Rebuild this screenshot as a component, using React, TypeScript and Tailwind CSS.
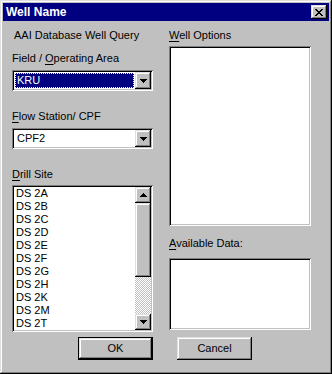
const sunken =
  'shadow-[inset_1px_1px_0_#808080,inset_-1px_-1px_0_#fff,inset_2px_2px_0_#000,inset_-2px_-2px_0_#c0c0c0]';
const raised =
  'shadow-[inset_-1px_-1px_0_#000,inset_1px_1px_0_#dfdfdf,inset_-2px_-2px_0_#808080,inset_2px_2px_0_#fff]';

function Arrow({ dir }: { dir: 'up' | 'down' }) {
  const d =
    dir === 'up'
      ? 'M3 0h1v1h-1zM2 1h3v1h-3zM1 2h5v1h-5zM0 3h7v1h-7z'
      : 'M0 0h7v1h-7zM1 1h5v1h-5zM2 2h3v1h-3zM3 3h1v1h-1z';
  return (
    <svg width="7" height="4" viewBox="0 0 7 4" shapeRendering="crispEdges">
      <path d={d} fill="#000" />
    </svg>
  );
}

function ArrowButton({ dir, className = '' }: { dir: 'up' | 'down'; className?: string }) {
  return (
    <div className={`flex w-[16px] items-center justify-center bg-[#c0c0c0] ${raised} ${className}`}>
      <Arrow dir={dir} />
    </div>
  );
}

function Combo({ value, selected }: { value: string; selected?: boolean }) {
  return (
    <div className={`flex h-[21px] w-[141px] bg-white p-[2px] ${sunken}`}>
      <div className="flex flex-1 p-[1px]">
        <div
          className={`flex flex-1 items-center pl-[2px] leading-[13px] ${
            selected ? 'bg-[#000080] text-white outline-1 outline-dotted outline-offset-[-1px] outline-[#ffff80]' : 'text-black'
          }`}
        >
          {value}
        </div>
      </div>
      <ArrowButton dir="down" className="h-[17px]" />
    </div>
  );
}

function Label({ children, className = '' }: { children: React.ReactNode; className?: string }) {
  return <div className={`h-[13px] leading-[13px] ${className}`}>{children}</div>;
}

function U({ children }: { children: React.ReactNode }) {
  return <span className="underline underline-offset-[2px]">{children}</span>;
}

const sites = ['DS 2A', 'DS 2B', 'DS 2C', 'DS 2D', 'DS 2E', 'DS 2F', 'DS 2G', 'DS 2H', 'DS 2K', 'DS 2M', 'DS 2T'];

export default function App() {
  return (
    <div
      className={`flex h-[374px] w-[332px] flex-col bg-[#c0c0c0] p-[3px] text-[11px] text-black shadow-[inset_-1px_-1px_0_#000,inset_1px_1px_0_#dfdfdf,inset_-2px_-2px_0_#808080,inset_2px_2px_0_#fff]`}
      style={{ fontFamily: '"Liberation Sans", Arial, sans-serif' }}
    >
      <div className="flex h-[18px] items-center bg-[#000080] pl-[3px] pr-[2px]">
        <span className="flex-1 text-[12px] font-bold leading-[14px] text-white">Well Name</span>
        <div className={`flex h-[14px] w-[16px] items-center justify-center bg-[#c0c0c0] ${raised}`}>
          <svg width="8" height="7" viewBox="0 0 8 7" shapeRendering="crispEdges">
            <path
              d="M0 0h2v1h-2zM6 0h2v1h-2zM1 1h2v1h-2zM5 1h2v1h-2zM2 2h4v1h-4zM3 3h2v1h-2zM2 4h4v1h-4zM1 5h2v1h-2zM5 5h2v1h-2zM0 6h2v1h-2zM6 6h2v1h-2z"
              fill="#000"
            />
          </svg>
        </div>
      </div>

      <div className="flex px-[9px]">
        <div className="flex w-[141px] flex-col">
          <Label className="mt-[8px] pl-[2px]">AAI Database Well Query</Label>
          <Label className="mt-[10px]">
            Field / <U>O</U>perating Area
          </Label>
          <div className="mt-[5px]">
            <Combo value="KRU" selected />
          </div>
          <Label className="mt-[19px]">
            <U>F</U>low Station/ CPF
          </Label>
          <div className="mt-[5px]">
            <Combo value="CPF2" />
          </div>
          <Label className="mt-[19px]">
            <U>D</U>rill Site
          </Label>
          <div className={`mt-[4px] flex h-[147px] bg-white p-[2px] ${sunken}`}>
            <div className="flex flex-1 flex-col pl-[2px]">
              {sites.map((s) => (
                <div key={s} className="h-[13px] leading-[13px]">
                  {s}
                </div>
              ))}
            </div>
            <div className="flex w-[16px] flex-col">
              <ArrowButton dir="up" className="h-[16px]" />
              <div className={`h-[74px] bg-[#c0c0c0] ${raised}`} />
              <div className="flex-1 bg-[repeating-conic-gradient(#c0c0c0_0_25%,#fff_0_50%)] bg-[length:2px_2px]" />
              <ArrowButton dir="down" className="h-[16px]" />
            </div>
          </div>
        </div>

        <div className="ml-[16px] flex w-[142px] flex-col">
          <Label className="mt-[8px]">
            <U>W</U>ell Options
          </Label>
          <div className={`mt-[4px] h-[180px] bg-white ${sunken}`} />
          <Label className="mt-[11px]">
            <U>A</U>vailable Data:
          </Label>
          <div className={`mt-[8px] h-[72px] bg-white ${sunken}`} />
        </div>
      </div>

      <div className="mt-[5px] flex px-[9px]">
        <div className="ml-[66px] h-[23px] w-[75px] border border-black">
          <div className={`flex h-full items-center justify-center bg-[#c0c0c0] ${raised}`}>OK</div>
        </div>
        <div className={`ml-[24px] flex h-[23px] w-[75px] items-center justify-center bg-[#c0c0c0] ${raised}`}>
          Cancel
        </div>
      </div>
    </div>
  );
}
